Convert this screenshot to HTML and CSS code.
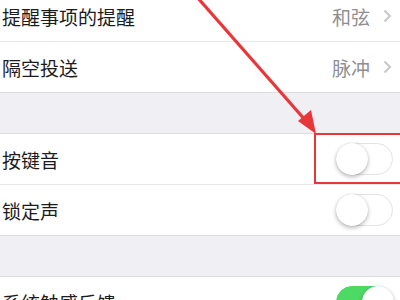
FILE: index.html
```html
<!DOCTYPE html>
<html lang="zh-CN">
<head>
    <meta charset="UTF-8">
    <title>声音与触感</title>
    <link rel="stylesheet" href="styles.css">
</head>
<body>
<div class="screen">
    <div class="group first">
        <div class="row">
            <span class="label">提醒事项的提醒</span>
            <span class="value">和弦</span>
            <svg class="chevron" width="9" height="14" viewBox="0 0 9 14"><polyline points="1.5,1.5 7,7 1.5,12.5" fill="none" stroke="#c7c7cc" stroke-width="2"/></svg>
        </div>
        <div class="row">
            <span class="label">隔空投送</span>
            <span class="value">脉冲</span>
            <svg class="chevron" width="9" height="14" viewBox="0 0 9 14"><polyline points="1.5,1.5 7,7 1.5,12.5" fill="none" stroke="#c7c7cc" stroke-width="2"/></svg>
        </div>
    </div>
    <div class="gap"></div>
    <div class="group">
        <div class="row">
            <span class="label">按键音</span>
            <span class="switch"></span>
        </div>
        <div class="row">
            <span class="label">锁定声</span>
            <span class="switch"></span>
        </div>
    </div>
    <div class="gap"></div>
    <div class="group">
        <div class="row">
            <span class="label">系统触感反馈</span>
            <span class="switch on"></span>
        </div>
    </div>

    <div class="mark"></div>
    <svg class="arrow" width="400" height="300" viewBox="0 0 400 300">
        <line x1="197" y1="-3" x2="306" y2="121" stroke="#e8373a" stroke-width="3.2"/>
        <polygon points="316,134 298,121 311,110" fill="#e8373a"/>
    </svg>
</div>
</body>
</html>
```

FILE: styles.css
```css
* {
    box-sizing: border-box;
}
body {
    margin: 0;
    background: #efeff4;
    font-family: "Noto Sans CJK SC", "Noto Sans", sans-serif;
    color: #1c1c1e;
}
.screen {
    position: relative;
    width: 400px;
    height: 300px;
    overflow: hidden;
}
.group {
    background: #fff;
    border-top: 1px solid #dcdce0;
    border-bottom: 1px solid #dcdce0;
}
.group.first {
    margin-top: -9px;
    border-top: none;
}
.row {
    display: flex;
    align-items: center;
    height: 51px;
    padding: 0 7px 0 2px;
    border-bottom: 1px solid #e6e6ea;
}
.row:last-child {
    height: 50px;
    border-bottom: none;
}
.label {
    flex-grow: 1;
    font-size: 19px;
}
.value {
    font-size: 19px;
    color: #8e8e93;
    margin-right: 13px;
}
.chevron {
    margin-right: 1px;
}
.gap {
    height: 40px;
}
.switch {
    position: relative;
    width: 57px;
    height: 32px;
    border-radius: 16px;
    background: #fff;
    border: 1.5px solid #e3e3e6;
}
.switch::after {
    content: "";
    position: absolute;
    top: -1.5px;
    left: -1.5px;
    width: 32px;
    height: 32px;
    border-radius: 50%;
    background: #fff;
    box-shadow: 0 2px 4px rgba(0, 0, 0, 0.28), 0 0 1px rgba(0, 0, 0, 0.2);
}
.switch.on {
    background: #4cd964;
    border-color: #4cd964;
}
.switch.on::after {
    left: auto;
    right: -1.5px;
}
.mark {
    position: absolute;
    left: 314px;
    top: 133px;
    width: 100px;
    height: 51px;
    border: 2px solid #e8373a;
}
.arrow {
    position: absolute;
    left: 0;
    top: 0;
}
```
